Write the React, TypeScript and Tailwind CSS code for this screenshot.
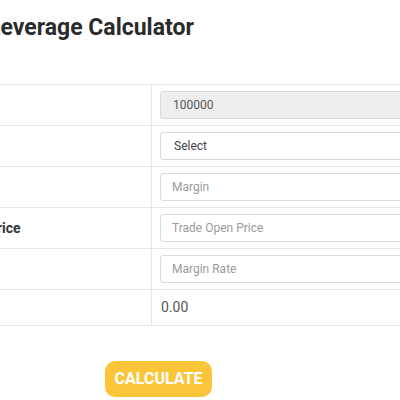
import React from "react";

const rows = [
  { label: "Balance", kind: "disabled", value: "100000" },
  { label: "Leverage", kind: "select", value: "Select" },
  { label: "Margin", kind: "input", value: "Margin" },
  { label: "Trade Open Price", kind: "input", value: "Trade Open Price" },
  { label: "Margin Rate", kind: "input", value: "Margin Rate" },
];

export default function App() {
  return (
    <div className="w-[400px] h-[400px] overflow-hidden bg-white font-['Roboto',sans-serif]">
      <div className="-ml-[96px] w-[700px]">
        <h1 className="ml-[84px] pt-[14px] text-[23px] leading-[27px] font-bold text-[#2b2b2b]">
          Leverage Calculator
        </h1>

        <div className="mt-[43px] border-b border-[#e6e6e6]">
          {rows.map((r) => (
            <div key={r.label} className="flex h-[41px] border-t border-[#e6e6e6]">
              <div className="w-[248px] shrink-0 border-r border-[#e6e6e6] pl-2 flex items-center text-[14px] font-bold text-[#333]">
                {r.label}
              </div>
              <div className="flex-1 px-2 pt-[6px]">
                {r.kind === "disabled" && (
                  <div className="h-[28px] rounded-[3px] border border-[#d9d9d9] bg-[#eeeeee] pl-3 flex items-center text-[12px] text-[#555]">
                    {r.value}
                  </div>
                )}
                {r.kind === "select" && (
                  <div className="h-[28px] rounded-[3px] border border-[#d9d9d9] bg-white pl-[13px] flex items-center text-[12px] text-[#444]">
                    {r.value}
                  </div>
                )}
                {r.kind === "input" && (
                  <input
                    placeholder={r.value}
                    className="w-full h-[28px] rounded-[3px] border border-[#d9d9d9] bg-white pl-[11px] text-[12px] text-[#555] placeholder:text-[#9a9a9a] outline-none"
                  />
                )}
              </div>
            </div>
          ))}
          <div className="flex border-t border-[#e6e6e6] h-[36px]">
            <div className="w-[248px] shrink-0 border-r border-[#e6e6e6] pl-2 flex items-center text-[14px] font-bold text-[#333]">
              Result
            </div>
            <div className="flex-1 pl-[9px] flex items-center text-[14px] text-[#555]">0.00</div>
          </div>
        </div>

        <button className="ml-[201px] mt-[35px] w-[107px] h-[36px] rounded-[10px] bg-[#fbc53a] text-white text-[16px] font-bold">
          CALCULATE
        </button>
      </div>
    </div>
  );
}
